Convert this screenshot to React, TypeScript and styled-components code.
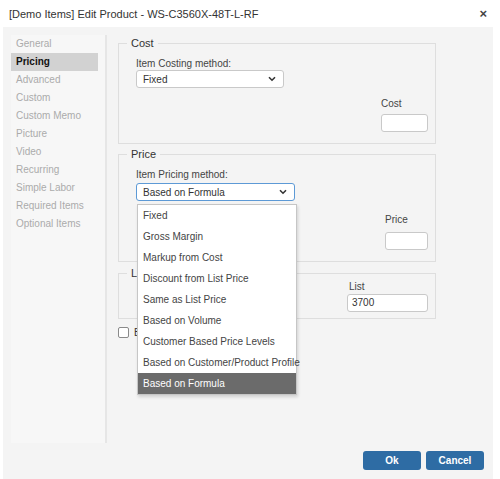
import React from 'react'
import styled, { createGlobalStyle } from 'styled-components'

const GlobalStyle = createGlobalStyle`
  html, body {
    margin: 0;
    padding: 0;
    background: #ffffff;
  }
  body {
    font-family: 'Liberation Sans', Arial, sans-serif;
    color: #333;
  }
`

const Dialog = styled.div`
  width: 500px;
  height: 479px;
  display: flex;
  flex-direction: column;
  background: #fff;
`

const TitleBar = styled.div`
  height: 27px;
  display: flex;
  align-items: center;
  justify-content: space-between;
  padding: 0 13px 0 9px;
  font-size: 11px;
  color: #333;
`

const Close = styled.span`
  font-size: 13px;
  font-weight: bold;
  color: #444;
`

const Body = styled.div`
  flex: 1;
  margin: 0 7px 0 3px;
  background: #f4f4f4;
  display: flex;
  flex-direction: column;
`

const Content = styled.div`
  display: flex;
  height: 408px;
  margin-top: 8px;
`

const Sidebar = styled.ul`
  list-style: none;
  margin: 0 0 0 8px;
  padding: 0 7px 0 0;
  width: 87px;
  background: #f7f7f7;
  border-right: 2px solid #e6e6e6;
`

const NavItem = styled.li<{ $active?: boolean }>`
  height: 18px;
  line-height: 18px;
  padding-left: 5px;
  font-size: 10px;
  color: ${p => (p.$active ? '#111' : '#ababab')};
  font-weight: ${p => (p.$active ? 'bold' : 'normal')};
  background: ${p => (p.$active ? '#d2d2d2' : 'transparent')};
`

const Main = styled.div`
  padding: 1px 0 0 11px;
  width: 318px;
  display: flex;
  flex-direction: column;
`

const Group = styled.fieldset<{ $mt: number; $pt: number; $pb: number }>`
  margin: ${p => p.$mt}px 0 0 0;
  padding: ${p => p.$pt}px 7px ${p => p.$pb}px 17px;
  border: 1px solid #dedede;
  min-width: 0;
  display: flex;
  flex-direction: column;
`

const Legend = styled.legend`
  font-size: 11px;
  line-height: 14px;
  color: #333;
  padding: 0 4px;
  margin-left: -9px;
`

const Label = styled.div`
  font-size: 10px;
  line-height: 13px;
  color: #444;
`

const SelectWrap = styled.div<{ $w: number; $mt: number }>`
  position: relative;
  width: ${p => p.$w}px;
  margin-top: ${p => p.$mt}px;
`

const SelectBox = styled.div<{ $focused?: boolean }>`
  height: 18px;
  box-sizing: border-box;
  border: 1px solid ${p => (p.$focused ? '#5d9ad6' : '#c9c9c9')};
  border-radius: 3px;
  background: #fff;
  display: flex;
  align-items: center;
  justify-content: space-between;
  padding: 0 7px 0 6px;
  font-size: 10px;
  color: #333;
`

const FieldRow = styled.div<{ $mt: number }>`
  display: flex;
  justify-content: flex-end;
  margin-top: ${p => p.$mt}px;
`

const Field = styled.div<{ $gap: number }>`
  display: flex;
  flex-direction: column;
  gap: ${p => p.$gap}px;
`

const FieldLabel = styled(Label)<{ $indent?: number }>`
  padding-left: ${p => p.$indent ?? 0}px;
`

const TextInput = styled.div<{ $w: number }>`
  width: ${p => p.$w}px;
  height: 18px;
  box-sizing: border-box;
  border: 1px solid #c9c9c9;
  border-radius: 3px;
  background: #fff;
  font-size: 10px;
  line-height: 16px;
  padding-left: 4px;
  color: #333;
`

const CheckRow = styled.label`
  display: flex;
  align-items: center;
  gap: 5px;
  margin-top: 8px;
  font-size: 10px;
  color: #333;
`

const Check = styled.span`
  width: 9px;
  height: 9px;
  border: 1px solid #8a8a8a;
  border-radius: 2px;
  background: #fff;
`

const Menu = styled.ul`
  position: absolute;
  top: 21px;
  left: 1px;
  width: 158px;
  margin: 0;
  padding: 0;
  list-style: none;
  background: #fff;
  border: 1px solid #c6c6c6;
  box-shadow: 1px 2px 3px rgba(0, 0, 0, 0.15);
  z-index: 5;
`

const MenuItem = styled.li<{ $selected?: boolean }>`
  height: 21px;
  line-height: 21px;
  padding-left: 5px;
  font-size: 10px;
  white-space: nowrap;
  color: ${p => (p.$selected ? '#fff' : '#444')};
  background: ${p => (p.$selected ? '#6b6b6b' : 'transparent')};
`

const Footer = styled.div`
  display: flex;
  justify-content: flex-end;
  gap: 5px;
  padding: 8px 9px 0 0;
`

const Button = styled.button`
  width: 58px;
  height: 19px;
  border: none;
  border-radius: 3px;
  background: #2e6ca4;
  color: #fff;
  font-family: 'Liberation Sans', Arial, sans-serif;
  font-size: 10px;
  font-weight: bold;
  padding: 0;
`

const Chevron = () => (
  <svg width="8" height="6" viewBox="0 0 8 6">
    <path d="M1 1.2 L4 4.2 L7 1.2" fill="none" stroke="#333" strokeWidth="1.6" />
  </svg>
)

const navItems = [
  'General',
  'Pricing',
  'Advanced',
  'Custom',
  'Custom Memo',
  'Picture',
  'Video',
  'Recurring',
  'Simple Labor',
  'Required Items',
  'Optional Items',
]

const pricingMethods = [
  'Fixed',
  'Gross Margin',
  'Markup from Cost',
  'Discount from List Price',
  'Same as List Price',
  'Based on Volume',
  'Customer Based Price Levels',
  'Based on Customer/Product Profile',
  'Based on Formula',
]

export default function App() {
  return (
    <>
      <GlobalStyle />
      <Dialog>
        <TitleBar>
          <span>[Demo Items] Edit Product - WS-C3560X-48T-L-RF</span>
          <Close>×</Close>
        </TitleBar>
        <Body>
          <Content>
            <Sidebar>
              {navItems.map(item => (
                <NavItem key={item} $active={item === 'Pricing'}>
                  {item}
                </NavItem>
              ))}
            </Sidebar>
            <Main>
              <Group $mt={0} $pt={7} $pb={11}>
                <Legend>Cost</Legend>
                <Label>Item Costing method:</Label>
                <SelectWrap $w={148} $mt={0}>
                  <SelectBox>
                    Fixed
                    <Chevron />
                  </SelectBox>
                </SelectWrap>
                <FieldRow $mt={9}>
                  <Field $gap={4}>
                    <FieldLabel>Cost</FieldLabel>
                    <TextInput $w={47} />
                  </Field>
                </FieldRow>
              </Group>

              <Group $mt={3} $pt={7} $pb={11}>
                <Legend>Price</Legend>
                <Label>Item Pricing method:</Label>
                <SelectWrap $w={159} $mt={2}>
                  <SelectBox $focused>
                    Based on Formula
                    <Chevron />
                  </SelectBox>
                  <Menu>
                    {pricingMethods.map(m => (
                      <MenuItem key={m} $selected={m === 'Based on Formula'}>
                        {m}
                      </MenuItem>
                    ))}
                  </Menu>
                </SelectWrap>
                <FieldRow $mt={12}>
                  <Field $gap={6}>
                    <FieldLabel>Price</FieldLabel>
                    <TextInput $w={43} />
                  </Field>
                </FieldRow>
              </Group>

              <Group $mt={4} $pt={0} $pb={6}>
                <Legend>List</Legend>
                <FieldRow $mt={0}>
                  <Field $gap={1}>
                    <FieldLabel $indent={2}>List</FieldLabel>
                    <TextInput $w={81}>3700</TextInput>
                  </Field>
                </FieldRow>
              </Group>

              <CheckRow>
                <Check />
                Based on formula
              </CheckRow>
            </Main>
          </Content>
          <Footer>
            <Button>Ok</Button>
            <Button>Cancel</Button>
          </Footer>
        </Body>
      </Dialog>
    </>
  )
}
